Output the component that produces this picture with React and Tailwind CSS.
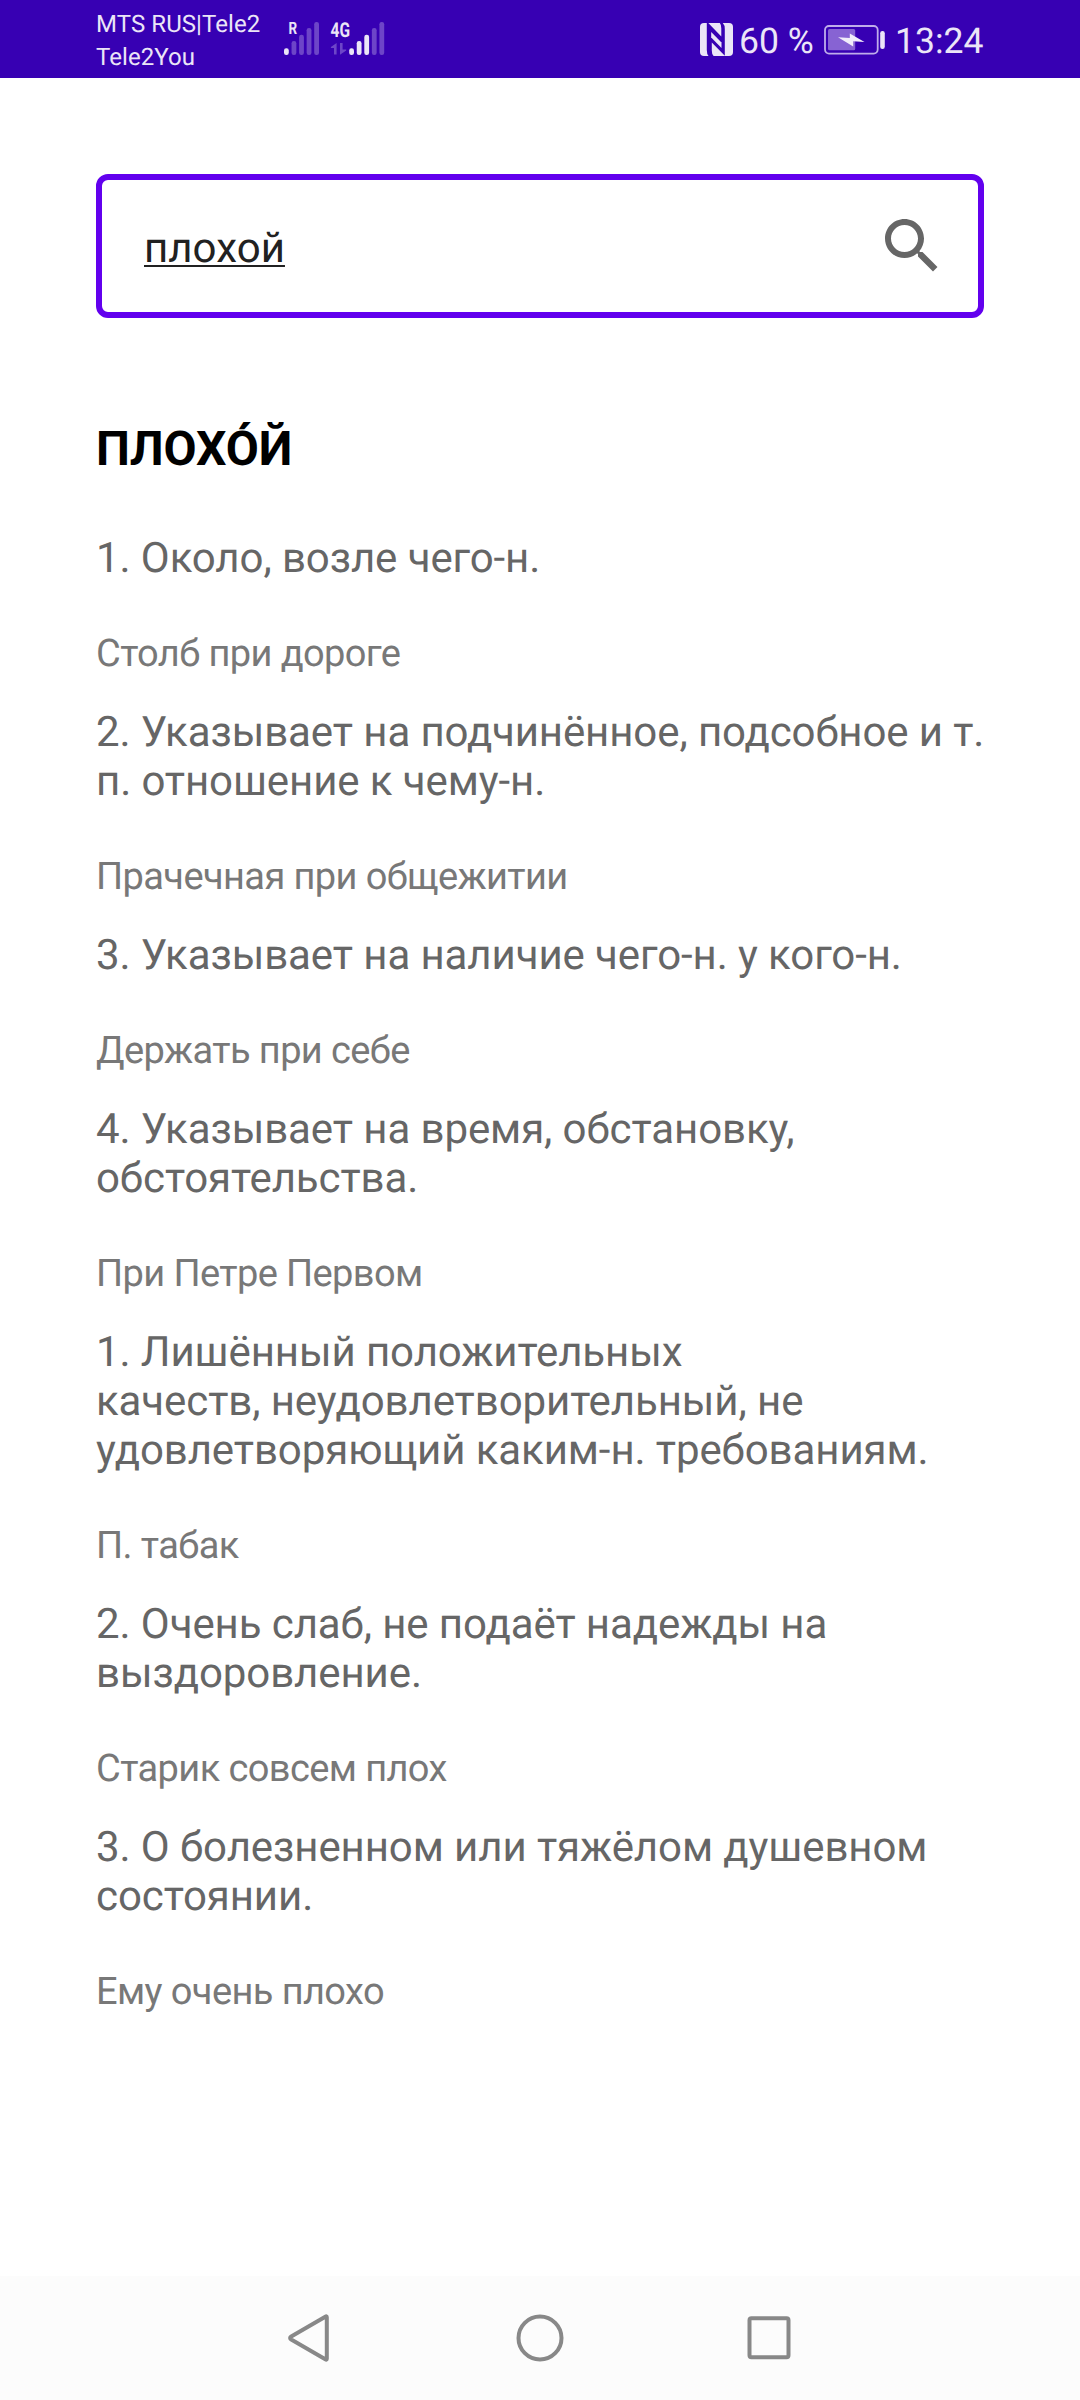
import React from "react";

const entries = [
  { lines: ["1. Около, возле чего-н."], example: "Столб при дороге" },
  {
    lines: ["2. Указывает на подчинённое, подсобное и т.", "п. отношение к чему-н."],
    example: "Прачечная при общежитии",
  },
  { lines: ["3. Указывает на наличие чего-н. у кого-н."], example: "Держать при себе" },
  { lines: ["4. Указывает на время, обстановку,", "обстоятельства."], example: "При Петре Первом" },
  {
    lines: [
      "1. Лишённый положительных",
      "качеств, неудовлетворительный, не",
      "удовлетворяющий каким-н. требованиям.",
    ],
    example: "П. табак",
  },
  { lines: ["2. Очень слаб, не подаёт надежды на", "выздоровление."], example: "Старик совсем плох" },
  { lines: ["3. О болезненном или тяжёлом душевном", "состоянии."], example: "Ему очень плохо" },
];

const barTops = [26.3, 19, 12.7, 6, 0];

function SignalBars({ x, active }) {
  return barTops.map((top, i) => (
    <rect
      key={i}
      x={x + i * 7.55}
      y={top}
      width="4.8"
      height={33 - top}
      rx="2.2"
      fill="#ebe5f7"
      fillOpacity={i < active ? 1 : 0.3}
    />
  ));
}

function Signals() {
  return (
    <svg className="ml-[24px] mt-[12px] h-[43px] w-[102px] shrink-0" viewBox="0 -10 102 43" fontFamily="Roboto, sans-serif" fontWeight="700" fill="#ebe5f7">
      <SignalBars x={0} active={1} />
      <text x="4.4" y="12.2" fontSize="17" textLength="8.6" lengthAdjust="spacingAndGlyphs">R</text>
      <SignalBars x={65.2} active={3} />
      <text x="46.5" y="14.7" fontSize="20.5" textLength="19.5" lengthAdjust="spacingAndGlyphs">4G</text>
      <path d="M52.6 21v11.5h-2.6v-6.5h-3.1v-1zM56 21h2.6v6.5h3.6v1L56 32.8z" fillOpacity=".3" />
    </svg>
  );
}

function NfcIcon() {
  return (
    <svg className="h-[33px] w-[33px] shrink-0" viewBox="0 0 33 33" fill="#ebe5f7">
      <rect width="33" height="33" rx="4" />
      <path d="M6.8 0H8.3L21.3 13.5V5.5Q21.3 1.5 19.8 0H22.8Q24.8 2 24.8 6V32.8L11.8 19.5V27.5Q11.8 31.5 13.6 33H8.5Q6.8 31 6.8 27Z" fill="#3700b3" />
      <path d="M11.2 9V14.4L21.5 25V19.6Z" />
    </svg>
  );
}

function BatteryIcon() {
  return (
    <svg className="ml-[10px] h-[30px] w-[62px] shrink-0" viewBox="0 0 62 30">
      <rect x="1" y="1" width="52.7" height="27.6" rx="4" fill="none" stroke="#bfadea" strokeWidth="1.8" />
      <rect x="4" y="4" width="27.2" height="21.3" rx="1.5" fill="#8763d3" />
      <path d="M14 12.2 25.8 13V8.5L40.5 17 29.2 16.2V21.5Z" fill="#f1edfa" />
      <rect x="56.2" y="6" width="4.6" height="18" rx="2.2" fill="#ebe5f7" />
    </svg>
  );
}

function StatusBar() {
  return (
    <header className="flex h-[78px] justify-between bg-[#3700b3] px-[96px] text-[#ebe5f7]">
      <div className="flex">
        <div className="w-[164px] pt-[8px] text-[24px] leading-[33px] tracking-[0.08px] whitespace-nowrap">
          <div>MTS RUS|Tele2</div>
          <div>Tele2You</div>
        </div>
        <Signals />
      </div>
      <div className="flex h-[79px] items-center text-[35.5px] leading-[42px] whitespace-nowrap">
        <NfcIcon />
        <span className="ml-[6px] mt-[2px] w-[75px]">60 %</span>
        <BatteryIcon />
        <span className="mt-[2px] ml-[9px] w-[89px]">13:24</span>
      </div>
    </header>
  );
}

function SearchField() {
  return (
    <div className="flex h-[144px] items-center justify-between rounded-[12px] border-[6px] border-[#6200ee] pr-[30px] pl-[42px]">
      <span className="mt-[5px] text-[42px] leading-[49px] tracking-[0.05px] text-[#212121] underline decoration-2 underline-offset-[3px] [text-decoration-skip-ink:none]">
        плохой
      </span>
      <svg className="size-[72px]" viewBox="0 0 24 24" fill="#666666">
        <path d="M15.5 14h-.79l-.28-.27C15.41 12.59 16 11.11 16 9.5 16 5.91 13.09 3 9.5 3S3 5.91 3 9.5 5.91 16 9.5 16c1.61 0 3.09-.59 4.23-1.57l.27.28v.79l5 4.99L20.49 19l-4.99-5zm-6 0C7.01 14 5 11.99 5 9.5S7.01 5 9.5 5 14 7.01 14 9.5 11.99 14 9.5 14z" />
      </svg>
    </div>
  );
}

function Entry({ lines, example }) {
  return (
    <li>
      <p className="text-[42px] leading-[49px] tracking-[-0.09px] whitespace-nowrap text-[#666666]">
        {lines.map((line) => (
          <span key={line} className="block">{line}</span>
        ))}
      </p>
      <p className="mt-[49px] text-[38px] leading-[45px] tracking-[-0.6px] text-[#787878]">{example}</p>
    </li>
  );
}

function NavBar() {
  return (
    <nav className="flex h-[124px] items-center justify-center gap-[180px] bg-[#fcfcfc]">
      <svg className="size-[48px]" viewBox="0 0 48 48" fill="none" stroke="#888888" strokeWidth="4" strokeLinejoin="round">
        <path d="M38.8 3.2Q38.8 1.8 37.3 2.7L3.2 22.5Q1 24 3.2 25.5L37.3 45.3Q38.8 46.2 38.8 44.8Z" />
      </svg>
      <svg className="size-[48px]" viewBox="0 0 48 48" fill="none" stroke="#888888" strokeWidth="4">
        <circle cx="24" cy="24" r="21.5" />
      </svg>
      <svg className="size-[48px]" viewBox="0 0 48 48" fill="none" stroke="#888888" strokeWidth="4">
        <rect x="5.5" y="4.3" width="39" height="39" rx="2" />
      </svg>
    </nav>
  );
}

export default function App() {
  return (
    <div className="flex h-[2400px] w-[1080px] flex-col bg-white font-[Roboto,sans-serif] [text-rendering:geometricPrecision]">
      <StatusBar />
      <main className="flex-1 px-[96px] pt-[96px]">
        <SearchField />
        <h1 className="mt-[102px] text-[48px] leading-[57px] font-bold tracking-[-0.15px] text-black">ПЛОХО́Й</h1>
        <ul className="mt-[57px] flex flex-col gap-[31px]">
          {entries.map((e) => (
            <Entry key={e.example} {...e} />
          ))}
        </ul>
      </main>
      <NavBar />
    </div>
  );
}
